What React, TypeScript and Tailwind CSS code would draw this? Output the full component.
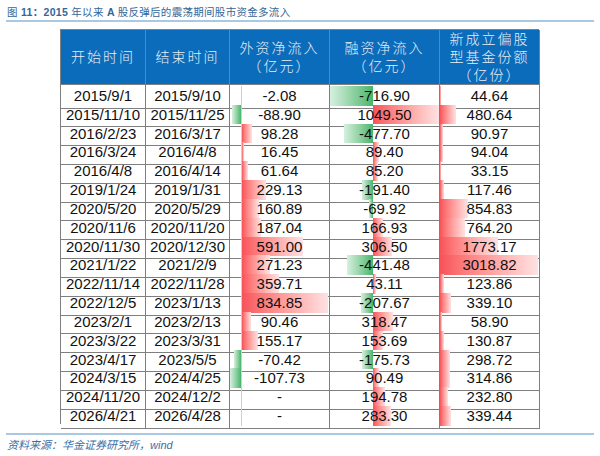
import React from "react";

type Row = [string, string, number | null, number, number];

const rows: Row[] = [
  ["2015/9/1", "2015/9/10", -2.08, -716.9, 44.64],
  ["2015/11/10", "2015/11/25", -88.9, 1049.5, 480.64],
  ["2016/2/23", "2016/3/17", 98.28, -477.7, 90.97],
  ["2016/3/24", "2016/4/8", 16.45, 89.4, 94.04],
  ["2016/4/8", "2016/4/14", 61.64, 85.2, 33.15],
  ["2019/1/24", "2019/1/31", 229.13, -191.4, 117.46],
  ["2020/5/20", "2020/5/29", 160.89, -69.92, 854.83],
  ["2020/11/6", "2020/11/20", 187.04, 166.93, 764.2],
  ["2020/11/30", "2020/12/30", 591.0, 306.5, 1773.17],
  ["2021/1/22", "2021/2/9", 271.23, -441.48, 3018.82],
  ["2022/11/14", "2022/11/28", 359.71, 43.11, 123.86],
  ["2022/12/5", "2023/1/13", 834.85, -207.67, 339.1],
  ["2023/2/1", "2023/2/13", 90.46, 318.47, 58.9],
  ["2023/3/22", "2023/3/31", 155.17, 153.69, 130.87],
  ["2023/4/17", "2023/5/5", -70.42, -175.73, 298.72],
  ["2024/3/15", "2024/4/25", -107.73, 90.49, 314.86],
  ["2024/11/20", "2024/12/2", null, 194.78, 232.8],
  ["2026/4/21", "2026/4/28", null, 283.3, 339.44],
];

const fmt = (v: number | null) => (v === null ? "-" : v.toFixed(2));

// excel style data bar: green fades out to the left, red fades out to the right
function DataBar({
  v,
  negW,
  negMax,
  posMax,
  posW,
  axis,
}: {
  v: number | null;
  negW: number;
  negMax: number;
  posMax: number;
  posW: number;
  axis?: boolean;
}) {
  const n = v !== null && v < 0 ? (negW * -v) / negMax : 0;
  const p = v !== null && v > 0 ? (posW * v) / posMax : 0;
  return (
    <div className="absolute inset-x-0 top-[1px] bottom-[2px] flex">
      <div className="flex justify-end" style={{ width: negW }}>
        {n > 0 && (
          <div className="h-full bg-gradient-to-l from-[#45b56c] to-[#d6f0e0]" style={{ width: n }} />
        )}
      </div>
      {axis && <div className="w-px h-full bg-[#cfcfcf]" />}
      <div className="flex-1 flex">
        {p > 0 && (
          <div className="h-full bg-gradient-to-r from-[#f7525a] to-[#fde2e3]" style={{ width: p }} />
        )}
      </div>
    </div>
  );
}

const cell = "border-r border-b border-[#7f7f7f] flex items-center justify-center";

export default function App() {
  return (
    <div className="w-[600px] h-[456px] bg-white px-[6px] overflow-hidden" style={{ fontFamily: '"Liberation Sans", "Noto Sans CJK SC", sans-serif' }}>
      <div className="pt-[5px] pb-[1px] border-b-2 border-[#a9c9e2] text-[10.5px] leading-[14px] tracking-[0.3px] text-[#346699] pl-[1px]">
        <span>图 </span>
        <span className="font-bold">11：2015 </span>
        <span>年以来 </span>
        <span className="font-bold">A </span>
        <span>股反弹后的震荡期间股市资金多流入</span>
      </div>

      <div className="ml-[54px] mt-[7px] w-[479px]">
        <div className="grid grid-cols-[85px_84px_100px_110px_100px] h-[56px] bg-[#0b6cbb] text-[#e9eff6] text-[14px] font-light leading-[18px] tracking-[2px] border-l border-t border-[#7f7f7f]">
          <div className={cell}>开始时间</div>
          <div className={cell}>结束时间</div>
          <div className={`${cell} flex-col`}>
            <span>外资净流入</span>
            <span>（亿元）</span>
          </div>
          <div className={`${cell} flex-col`}>
            <span>融资净流入</span>
            <span>（亿元）</span>
          </div>
          <div className={`${cell} flex-col`}>
            <span>新成立偏股</span>
            <span>型基金份额</span>
            <span>（亿份）</span>
          </div>
        </div>

        <div className="border-l border-[#7f7f7f] text-[15px] text-[#111]">
          {rows.map((r) => (
            <div key={r[0] + r[1]} className="grid grid-cols-[85px_84px_100px_110px_100px] h-[18.83px]">
              <div className={cell}>{r[0]}</div>
              <div className={cell}>{r[1]}</div>
              <div className={`${cell} relative`}>
                <DataBar v={r[2]} negW={11} negMax={107.73} posW={88} posMax={834.85 * (88 / 86)} axis />
                <span className="relative">{fmt(r[2])}</span>
              </div>
              <div className={`${cell} relative`}>
                <DataBar v={r[3]} negW={43} negMax={716.9} posW={66} posMax={1049.5} />
                <span className="relative">{fmt(r[3])}</span>
              </div>
              <div className={`${cell} relative`}>
                <DataBar v={r[4]} negW={0} negMax={1} posW={98} posMax={3018.82} />
                <span className="relative">{fmt(r[4])}</span>
              </div>
            </div>
          ))}
        </div>
      </div>

      <div className="mt-[9px] border-t-2 border-[#a9c9e2]" />
      <div className="mt-[3px] pl-[1px] text-[11px] leading-[14px] italic text-[#3b6ea6]">
        资料来源：华金证券研究所，wind
      </div>
    </div>
  );
}
